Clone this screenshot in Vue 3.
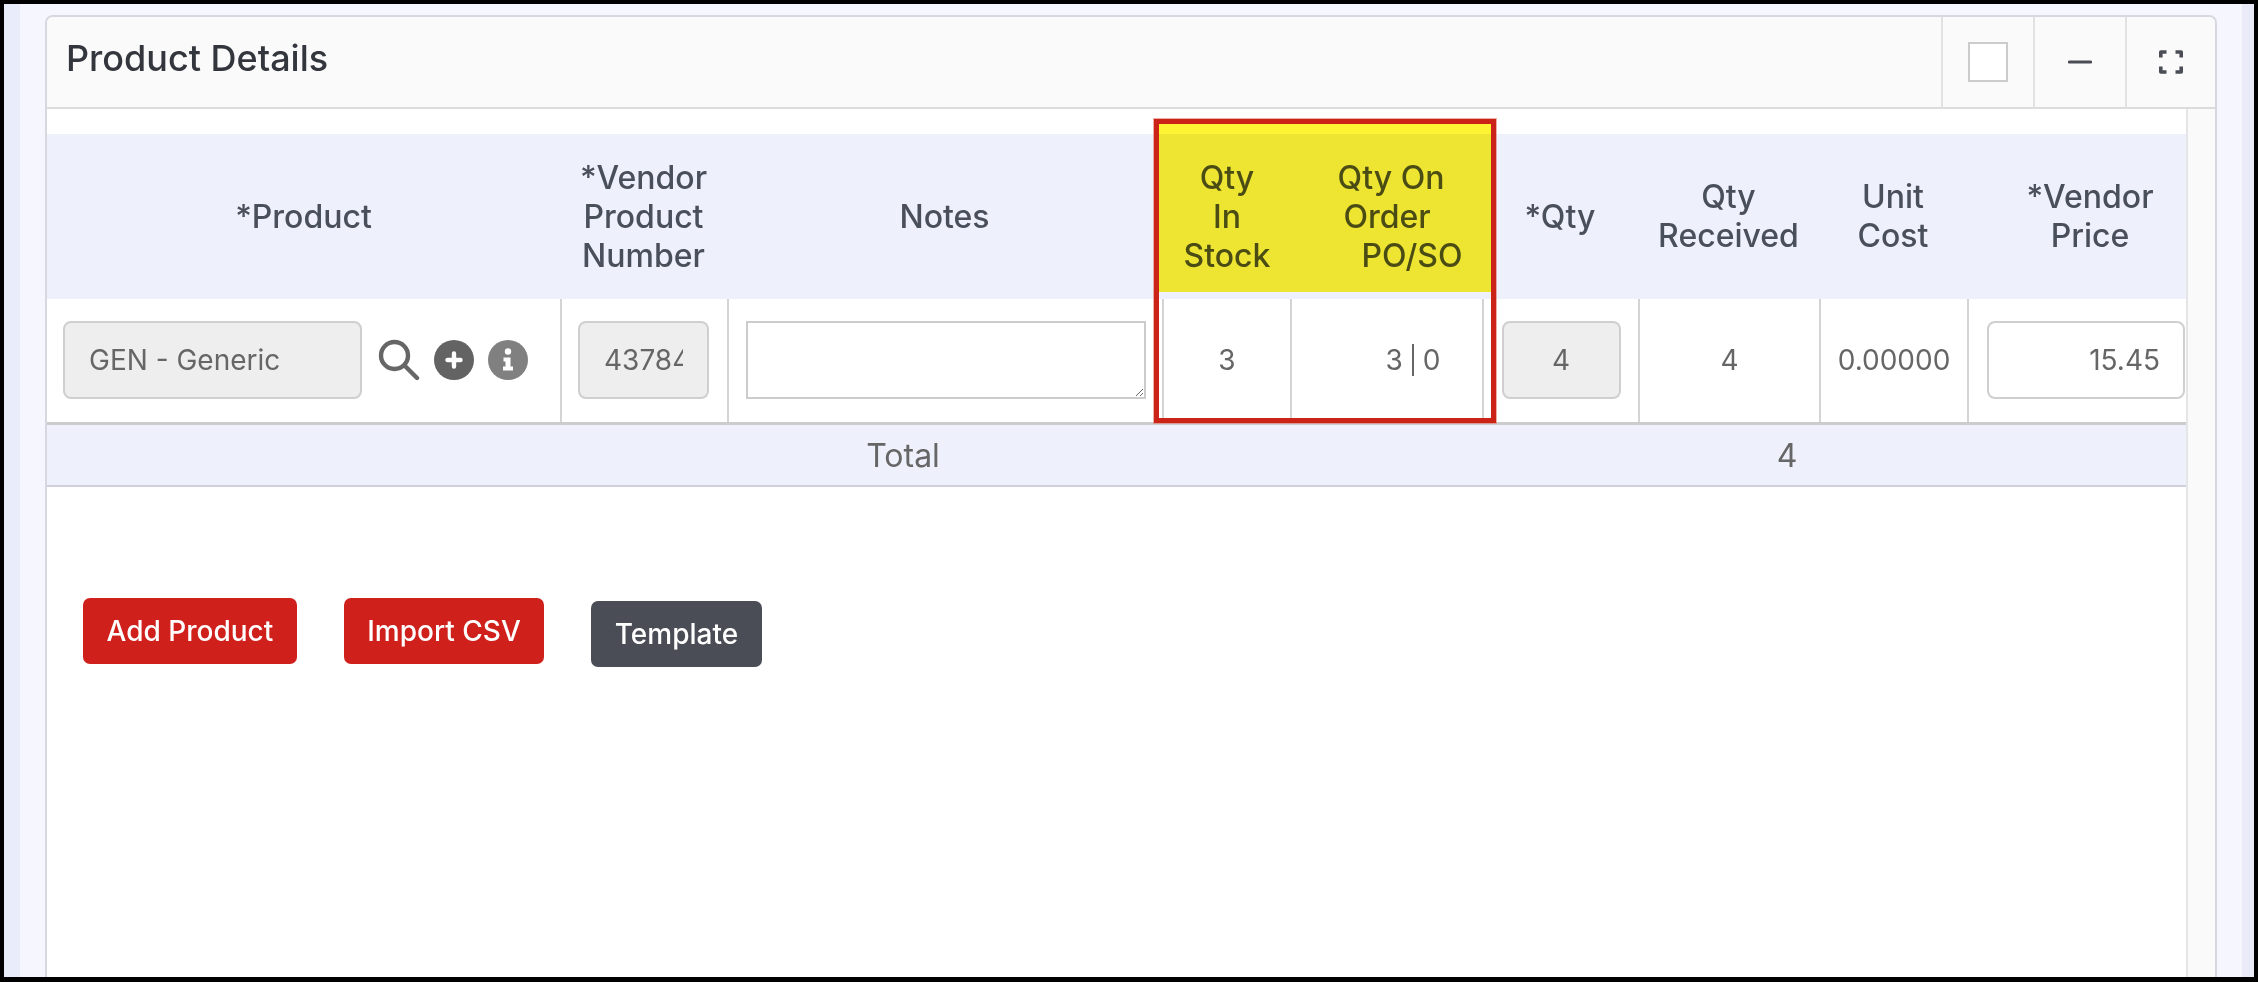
<script setup>
const headers = [
  { lines: ['*Product'] },
  { lines: ['*Vendor', 'Product', 'Number'] },
  { lines: ['Notes'] },
  { lines: ['Qty', 'In', 'Stock'], cls: 'in-stock' },
  { lines: ['Qty On', 'Order', 'PO/SO'], cls: 'on-order' },
  { lines: ['*Qty'] },
  { lines: ['Qty', 'Received'], cls: 'two' },
  { lines: ['Unit', 'Cost'], cls: 'two' },
  { lines: ['*Vendor', 'Price'], cls: 'two vendor-price' },
]
</script>

<template>
  <div class="frame">
    <div class="backdrop">
      <section class="panel">
        <header class="panel-head">
          <h2 class="title">Product Details</h2>
          <div class="tool"><span class="check"></span></div>
          <div class="tool">
            <svg width="24" height="6" viewBox="0 0 24 6"><path d="M1.5 3h21" stroke="#4a4d55" stroke-width="3.2" stroke-linecap="round" /></svg>
          </div>
          <div class="tool last">
            <svg width="26" height="26" viewBox="0 0 26 26" fill="none" stroke="#4a4d55" stroke-width="3.6" stroke-linejoin="round">
              <path d="M2.8 8.5V3h5.7M17.5 3h5.7v5.5M23.2 17.5V23h-5.7M8.5 23H2.8v-5.5" />
            </svg>
          </div>
        </header>
        <div class="panel-body">
          <div class="main">
            <div class="grid head">
              <div v-for="(h, i) in headers" :key="i" class="th" :class="h.cls">
                <span v-for="l in h.lines" :key="l">{{ l }}</span>
              </div>
            </div>
            <div class="grid row">
              <div class="td product">
                <div class="field ro wide">GEN - Generic</div>
                <svg class="search" width="42" height="42" viewBox="0 0 42 42" fill="none" stroke="#666" stroke-width="4.4" stroke-linecap="round">
                  <circle cx="16.5" cy="16.5" r="13.5" />
                  <path d="M26.5 26.5L39 39" />
                </svg>
                <svg class="circ" width="40" height="40" viewBox="0 0 40 40">
                  <circle cx="20" cy="20" r="20" fill="#636363" />
                  <path d="M20 13.5v13M13.5 20h13" stroke="#fff" stroke-width="4.4" stroke-linecap="round" />
                </svg>
                <svg class="circ gap" width="40" height="40" viewBox="0 0 40 40">
                  <circle cx="20" cy="20" r="20" fill="#808080" />
                  <circle cx="20" cy="11.5" r="3.2" fill="#fff" />
                  <path d="M15.5 17.5h7v9h2.5v4H15v-4h2.5v-5h-2z" fill="#fff" />
                </svg>
              </div>
              <div class="td vendor-no"><div class="field ro clip"><span>437846</span></div></div>
              <div class="td notes"><textarea class="area"></textarea></div>
              <div class="td">3</div>
              <div class="td split"><span>3</span><i class="bar"></i><span>0</span></div>
              <div class="td"><div class="field ro qty">4</div></div>
              <div class="td">4</div>
              <div class="td">0.00000</div>
              <div class="td price"><div class="field">15.45</div></div>
            </div>
            <div class="total">
              <div>Total</div>
              <div class="sum">4</div>
              <div></div>
            </div>
            <div class="actions">
              <button class="btn red">Add Product</button>
              <button class="btn red">Import CSV</button>
              <button class="btn dark">Template</button>
            </div>
            <div class="callout"><div class="marker"></div></div>
          </div>
          <div class="scroll"></div>
        </div>
      </section>
    </div>
  </div>
</template>

<style>
html, body { margin: 0; background: #000; }
</style>

<style scoped>
* { box-sizing: border-box; }
.frame {
  width: 2258px;
  height: 982px;
  padding: 4px 4px 5px 4px;
  background: #000;
  font-family: Inter, "Noto Sans", sans-serif;
  overflow: hidden;
}
.backdrop {
  height: 100%;
  padding: 11px 37px 0 41px;
  background: linear-gradient(90deg, #e9edfb 16px, #f6f7fe 16px, #f6f7fe 2238px, #e9ebf9 2238px);
}
.panel {
  height: 100%;
  display: flex;
  flex-direction: column;
  background: #fff;
  border: 2px solid #d6d8e0;
  border-bottom: 0;
  border-radius: 8px 8px 0 0;
  overflow: hidden;
}
.panel-head {
  height: 92px;
  flex: none;
  display: flex;
  background: #fafafa;
  border-bottom: 2px solid #dcdcdc;
}
.title {
  flex: 1;
  margin: 0;
  padding: 0 0 8px 19px;
  display: flex;
  align-items: center;
  font-size: 36px;
  font-weight: 500;
  color: #33363d;
}
.tool {
  width: 92px;
  display: flex;
  align-items: center;
  justify-content: center;
  border-left: 2px solid #e2e2e2;
}
.tool.last { width: 90px; }
.check {
  display: block;
  width: 40px;
  height: 40px;
  background: #fff;
  border: 2px solid #ccc;
}
.panel-body { flex: 1; display: flex; min-height: 0; }
.main { position: relative; width: 2139px; flex: none; padding-top: 25px; }
.scroll { flex: 1; background: #fafafa; border-left: 2px solid #e5e5e5; }
.grid {
  display: grid;
  grid-template-columns: 513px 167px 435px 128px 192px 156px 181px 148px 219px;
}
.head { height: 165px; background: #eef0fb; }
.th {
  display: flex;
  flex-direction: column;
  align-items: center;
  justify-content: center;
  font-size: 32px;
  line-height: 39px;
  font-weight: 500;
  color: #4a4f5c;
}
.in-stock { padding-left: 2px; }
.on-order span:nth-child(1) { padding-left: 10px; }
.on-order span:nth-child(2) { padding-left: 2px; }
.on-order span:nth-child(3) { padding-left: 52px; }
.two { padding-bottom: 2px; }
.vendor-price { padding-left: 27px; }
.row { height: 126px; border-bottom: 3px solid #ccc; }
.td {
  display: flex;
  align-items: center;
  justify-content: center;
  padding-bottom: 1px;
  border-left: 2px solid #d4d4d4;
  font-size: 28px;
  color: #666;
  min-width: 0;
}
.td.product { justify-content: flex-start; padding-left: 16px; border-left: 0; }
.vendor-no { padding-right: 2px; }
.search { margin: 0 0 0 16px; }
.circ { margin-left: 14px; }
.circ.gap { margin-left: 14px; }
.field {
  width: 198px;
  height: 78px;
  display: flex;
  align-items: center;
  justify-content: flex-end;
  padding: 0 23px 0 24px;
  border: 2px solid #cfcfcf;
  border-radius: 8px;
  background: #fff;
  color: #666;
  white-space: nowrap;
  overflow: hidden;
}
.ro { background: #eee; }
.wide { width: 299px; justify-content: flex-start; flex: none; }
.clip { width: 131px; justify-content: flex-start; }
.clip span { display: block; width: 79px; overflow: hidden; }
.qty { width: 119px; justify-content: center; padding: 0; }
.price { justify-content: flex-end; padding-right: 1px; }
.area {
  display: block;
  width: 400px;
  height: 78px;
  border: 2px solid #ccc;
  border-radius: 0;
  background: #fff;
  outline: 0;
}
.split { padding-left: 52px; gap: 9px; }
.bar { display: block; width: 2px; height: 32px; background: #666; }
.total {
  display: grid;
  grid-template-columns: 1712px 56px 1fr;
  height: 62px;
  align-items: center;
  text-align: center;
  background: #eef0fb;
  border-bottom: 2px solid #cfd0da;
  font-size: 32px;
  color: #666;
}
.actions {
  display: flex;
  align-items: flex-start;
  gap: 47px;
  padding: 111px 0 0 36px;
}
.btn {
  height: 66px;
  padding: 0 23.5px;
  border: 0;
  border-radius: 7px;
  font: 500 28px Inter, "Noto Sans", sans-serif;
  color: #fff;
}
.red { background: #cf201c; }
.dark { background: #4a4d55; margin-top: 3px; }
.callout {
  position: absolute;
  left: 1107px;
  top: 10px;
  width: 342px;
  height: 304px;
  border: 5px solid #cb2318;
  box-shadow: 0 0 0 1px rgba(225, 120, 110, 0.6);
}
.marker {
  height: 168px;
  background: #fff433;
  mix-blend-mode: multiply;
}
</style>
